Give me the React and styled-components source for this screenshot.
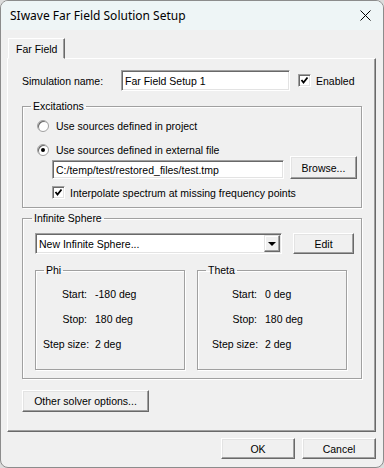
import React from 'react';
import styled, { createGlobalStyle } from 'styled-components';

const GlobalStyle = createGlobalStyle`
    html, body {
        margin: 0;
        padding: 0;
        background: #dcdcdc;
    }
    body {
        font-family: "Liberation Sans", Arial, sans-serif;
        font-size: 10.5px;
        color: #000;
    }
`;

const Window = styled.div`
    width: 384px;
    height: 468px;
    box-sizing: border-box;
    border: 1px solid #8c8c8c;
    border-radius: 8px;
    overflow: hidden;
    background: #f0f0f0;
    display: flex;
    flex-direction: column;
`;

const TitleBar = styled.div`
    height: 29px;
    flex: none;
    display: flex;
    align-items: center;
    justify-content: space-between;
    padding: 0 10px 0 9px;
    background: #eef5f6;
    font-family: "Noto Sans", "Open Sans", sans-serif;
    font-size: 12px;
`;

const CloseIcon = styled.svg`
    width: 11px;
    height: 11px;
    margin-right: 2px;
`;

const Body = styled.div`
    flex: 1;
    display: flex;
    flex-direction: column;
    padding: 8px 7px 0 6px;
`;

const TabStrip = styled.div`
    display: flex;
    padding-left: 1px;
`;

const Tab = styled.div`
    position: relative;
    z-index: 1;
    height: 19px;
    padding: 0 7px;
    margin-bottom: -1px;
    display: flex;
    align-items: center;
    background: #f0f0f0;
    border: 1px solid;
    border-color: #fff #696969 transparent #fff;
    box-shadow: inset -1px 0 0 #a0a0a0;
`;

const Panel = styled.div`
    height: 374px;
    box-sizing: border-box;
    border: 1px solid;
    border-color: #fff #696969 #696969 #fff;
    box-shadow: inset -1px -1px 0 #a0a0a0;
    padding: 0 0 0 14px;
    display: flex;
    flex-direction: column;
`;

const Row = styled.div`
    display: flex;
    align-items: ${props => props.$align || 'center'};
    height: ${props => props.$h}px;
    margin-top: ${props => props.$mt || 0}px;
    margin-left: ${props => props.$ml || 0}px;
    padding-left: ${props => props.$indent || 0}px;
`;

const FieldLabel = styled.span`
    width: ${props => props.$w}px;
    flex: none;
`;

const TextBox = styled.div`
    width: ${props => props.$w}px;
    height: ${props => props.$h}px;
    box-sizing: border-box;
    flex: none;
    display: flex;
    align-items: center;
    padding-left: 3px;
    background: #fff;
    border: 1px solid;
    border-color: #a0a0a0 #fff #fff #a0a0a0;
    box-shadow: inset 1px 1px 0 #696969, inset -1px -1px 0 #e3e3e3;
    white-space: nowrap;
    overflow: hidden;
`;

const Button = styled.div`
    width: ${props => props.$w}px;
    height: ${props => props.$h}px;
    margin-left: ${props => props.$ml || 0}px;
    margin-top: ${props => props.$mt || 0}px;
    box-sizing: border-box;
    flex: none;
    display: flex;
    align-items: center;
    justify-content: center;
    background: #f0f0f0;
    border: 1px solid;
    border-color: #fff #696969 #696969 #fff;
    box-shadow: inset -1px -1px 0 #a0a0a0, inset 1px 1px 0 #e3e3e3;
`;

const CheckBox = styled.span`
    width: 13px;
    height: 13px;
    box-sizing: border-box;
    flex: none;
    display: inline-flex;
    align-items: center;
    justify-content: center;
    margin-right: ${props => props.$gap || 5}px;
    background: #fff;
    border: 1px solid;
    border-color: #a0a0a0 #fff #fff #a0a0a0;
    box-shadow: inset 1px 1px 0 #696969, inset -1px -1px 0 #e3e3e3;
`;

const Radio = styled.span`
    width: 12px;
    height: 12px;
    box-sizing: border-box;
    flex: none;
    border-radius: 50%;
    margin-right: 7px;
    display: inline-flex;
    align-items: center;
    justify-content: center;
    background: #fff;
    border: 1px solid #a0a0a0;
    box-shadow: inset 1px 1px 0 #696969;

    &::after {
        content: '';
        width: 4px;
        height: 4px;
        border-radius: 50%;
        background: ${props => props.$on ? '#000' : 'transparent'};
    }
`;

const Group = styled.fieldset`
    margin: ${props => props.$mt || 0}px 0 0 0;
    padding: 0;
    min-width: 0;
    width: ${props => props.$w}px;
    box-sizing: border-box;
    border: 1px solid #a0a0a0;
    box-shadow: inset 1px 1px 0 #fff, 1px 1px 0 #fff;
`;

const Legend = styled.legend`
    margin-left: ${props => props.$ml || 8}px;
    padding: 0 2px;
    line-height: 14px;
`;

const GroupBody = styled.div`
    padding: ${props => props.$pad};
    display: flex;
    flex-direction: column;
`;

const SubGroups = styled.div`
    display: flex;
    gap: 12px;
    margin-top: 9px;
`;

const ValueGrid = styled.div`
    display: grid;
    grid-template-columns: ${props => props.$label}px auto;
    column-gap: 8px;
    row-gap: 11px;
    line-height: 14px;
    padding: 10px 0 18px ${props => props.$indent}px;
`;

const GridLabel = styled.span`
    text-align: right;
    white-space: nowrap;
`;

const Combo = styled(TextBox)`
    justify-content: space-between;
    padding: 0 1px 0 3px;
`;

const ComboArrow = styled.span`
    width: 16px;
    height: 17px;
    box-sizing: border-box;
    display: flex;
    align-items: center;
    justify-content: center;
    background: #f0f0f0;
    border: 1px solid;
    border-color: #e3e3e3 #696969 #696969 #e3e3e3;
    box-shadow: inset -1px -1px 0 #a0a0a0, inset 1px 1px 0 #fff;

    &::after {
        content: '';
        border-left: 4px solid transparent;
        border-right: 4px solid transparent;
        border-top: 4px solid #000;
    }
`;

const Footer = styled.div`
    display: flex;
    justify-content: flex-end;
    gap: 7px;
    margin-top: 6px;
`;

const Check = () => (
    <svg width="9" height="9" viewBox="0 0 9 9">
        <polyline points="1.5,4 3.5,6.5 7.5,1.5" fill="none" stroke="#000" strokeWidth="1.8" />
    </svg>
);

const rows = {
    phi: [['Start:', '-180 deg'], ['Stop:', '180 deg'], ['Step size:', '2 deg']],
    theta: [['Start:', '0 deg'], ['Stop:', '180 deg'], ['Step size:', '2 deg']],
};

const Values = ({ items, label, indent }) => (
    <ValueGrid $label={label} $indent={indent}>
        {items.map(([name, value]) => (
            <React.Fragment key={name}>
                <GridLabel>{name}</GridLabel>
                <span>{value}</span>
            </React.Fragment>
        ))}
    </ValueGrid>
);

const App = () => {
    return (
        <>
            <GlobalStyle />
            <Window>
                <TitleBar>
                    <span>SIwave Far Field Solution Setup</span>
                    <CloseIcon viewBox="0 0 11 11">
                        <path d="M0.5 0.5 L10.5 10.5 M10.5 0.5 L0.5 10.5" stroke="#000" strokeWidth="1" />
                    </CloseIcon>
                </TitleBar>

                <Body>
                    <TabStrip>
                        <Tab>Far Field</Tab>
                    </TabStrip>

                    <Panel>
                        <Row $h={21} $mt={11}>
                            <FieldLabel $w={99}>Simulation name:</FieldLabel>
                            <TextBox $w={169} $h={21}>Far Field Setup 1</TextBox>
                            <Row $h={13} $ml={8}>
                                <CheckBox><Check /></CheckBox>
                                <span>Enabled</span>
                            </Row>
                        </Row>

                        <Group $w={340} $mt={8}>
                            <Legend>Excitations</Legend>
                            <GroupBody $pad="0 0 8px 14px">
                                <Row $h={13} $mt={6}>
                                    <Radio />
                                    <span>Use sources defined in project</span>
                                </Row>
                                <Row $h={13} $mt={11}>
                                    <Radio $on />
                                    <span>Use sources defined in external file</span>
                                </Row>
                                <Row $h={23} $indent={15} $align="flex-end">
                                    <TextBox $w={232} $h={19}>C:/temp/test/restored_files/test.tmp</TextBox>
                                    <Button $w={67} $h={23} $ml={6}>Browse...</Button>
                                </Row>
                                <Row $h={13} $mt={7} $indent={15}>
                                    <CheckBox $gap={5}><Check /></CheckBox>
                                    <span>Interpolate spectrum at missing frequency points</span>
                                </Row>
                            </GroupBody>
                        </Group>

                        <Group $w={340} $mt={3}>
                            <Legend $ml={9}>Infinite Sphere</Legend>
                            <GroupBody $pad="0 0 8px 12px">
                                <Row $h={21} $mt={8}>
                                    <Combo $w={247} $h={21}>
                                        <span>New Infinite Sphere...</span>
                                        <ComboArrow />
                                    </Combo>
                                    <Button $w={61} $h={21} $ml={11}>Edit</Button>
                                </Row>
                                <SubGroups>
                                    <Group $w={150}>
                                        <Legend>Phi</Legend>
                                        <Values items={rows.phi} label={44} indent={7} />
                                    </Group>
                                    <Group $w={150}>
                                        <Legend>Theta</Legend>
                                        <Values items={rows.theta} label={45} indent={14} />
                                    </Group>
                                </SubGroups>
                            </GroupBody>
                        </Group>

                        <Button $w={127} $h={22} $mt={11}>Other solver options...</Button>
                    </Panel>

                    <Footer>
                        <Button $w={74} $h={21}>OK</Button>
                        <Button $w={74} $h={21}>Cancel</Button>
                    </Footer>
                </Body>
            </Window>
        </>
    );
};

export default App;
